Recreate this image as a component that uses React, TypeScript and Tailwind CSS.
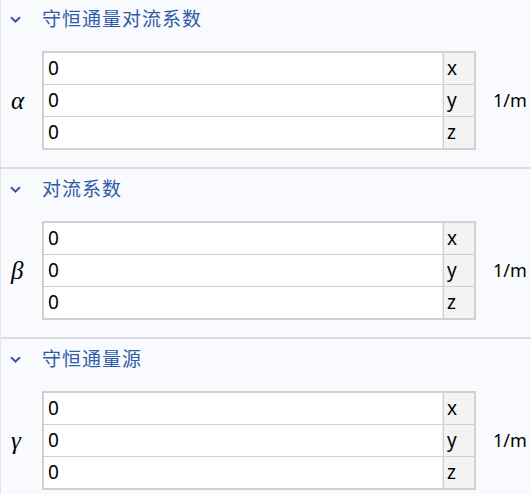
import React from 'react';

const sections = [
  { title: '守恒通量对流系数', symbol: 'α' },
  { title: '对流系数', symbol: 'β' },
  { title: '守恒通量源', symbol: 'γ' },
];

const axes = ['x', 'y', 'z'];

const Chevron = () => (
  <svg width="11" height="7" viewBox="0 0 11 7" className="shrink-0">
    <path d="M1 1.2 L5.5 5.5 L10 1.2" fill="none" stroke="#3b5c9a" strokeWidth="2" />
  </svg>
);

export default function App() {
  return (
    <div
      className="w-[531px] h-[495px] overflow-hidden bg-[#f8fafd] border-l border-[#e2e4e8] -mt-px"
      style={{ fontFamily: '"Noto Sans", "Noto Sans CJK SC", sans-serif' }}
    >
      {sections.map((s) => (
        <div key={s.title} className="border-b-2 border-[#dcdde0] pb-[17px]">
          {/* header */}
          <div className="h-[40px] flex items-center pl-[9px]">
            <Chevron />
            <span className="ml-[21px] text-[19px] text-[#2e5ca6] tracking-[1px]">{s.title}</span>
          </div>

          {/* vector field */}
          <div className="flex items-center mt-[12px]">
            <span
              className="w-[41px] pl-[10px] text-[25px] italic text-black leading-none"
              style={{ fontFamily: '"Liberation Serif", serif' }}
            >
              {s.symbol}
            </span>
            <div className="w-[434px] grid grid-cols-[1fr_30px] grid-rows-[31px_31px_31px] gap-px p-[2px] bg-[#d0d0d0]">
              {axes.map((a) => (
                <React.Fragment key={a}>
                  <div className="bg-white border-r border-[#ececec] flex items-center pl-[4px] text-[19px] text-black">
                    0
                  </div>
                  <div className="bg-[#f3f3f3] flex items-center pl-[3px] text-[19px] text-black leading-none">
                    {a}
                  </div>
                </React.Fragment>
              ))}
            </div>
            <span className="ml-[17px] text-[18px] text-black">1/m</span>
          </div>
        </div>
      ))}
    </div>
  );
}
